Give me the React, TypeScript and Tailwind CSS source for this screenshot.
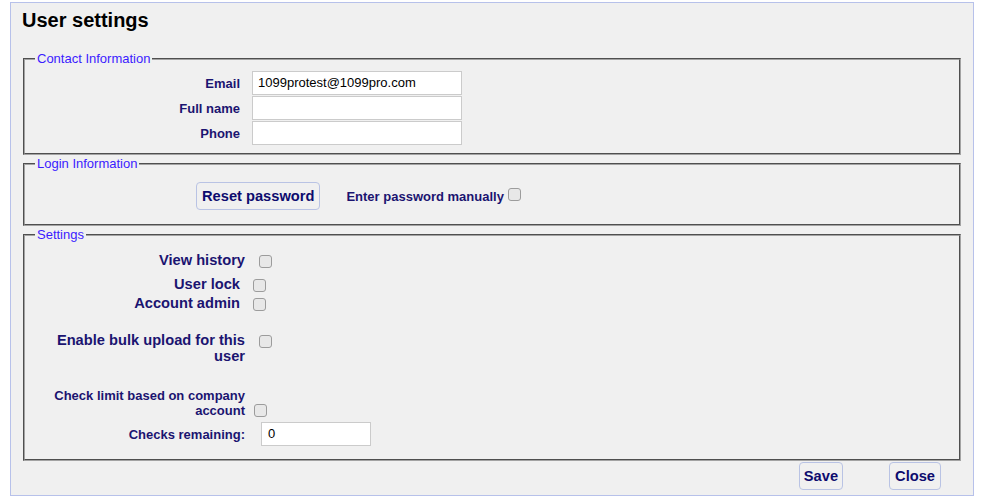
import React from "react";

const Box = ({ className = "" }: { className?: string }) => (
  <span
    className={
      "inline-block w-[13px] h-[13px] shrink-0 rounded-[3px] border border-[#9c9c9c] bg-[#e8e8e8] " +
      className
    }
  />
);

const fs =
  "mx-[12px] border-2 [border-style:groove] border-[#a3a3a3] px-[10px] min-w-0";
const lg = "px-[2px] text-[13px] leading-[15px] text-[#3b1cff]";
const lbl = "text-[#1b1470] font-bold";

export default function App() {
  return (
    <div className="pt-[2px] pl-[10px] font-['Liberation_Sans',Arial,sans-serif]">
      <div className="w-[964px] h-[494px] border border-[#b7c1ea] bg-[#f0f0f0] flex flex-col">
        <h1 className="pl-[11px] pt-[6px] text-[20px] leading-[23px] font-bold text-black">
          User settings
        </h1>

        {/* Contact Information */}
        <fieldset className={fs + " mt-[19px] pt-[5px] pb-[8px]"}>
          <legend className={lg}>Contact Information</legend>
          {[
            ["Email", "1099protest@1099pro.com"],
            ["Full name", ""],
            ["Phone", ""],
          ].map(([l, v], i) => (
            <div key={l} className={"flex items-center -ml-[10px]" + (i ? " mt-[1px]" : "")}>
              <div className={lbl + " w-[215px] text-right text-[13px] leading-[15px]"}>{l}</div>
              <div className="ml-[12px] w-[210px] h-[24px] border border-[#cbcbcb] bg-white pl-[5px] text-[13px] leading-[22px] text-black">
                {v}
              </div>
            </div>
          ))}
        </fieldset>

        {/* Login Information */}
        <fieldset className={fs + " mt-[1px] pt-[11px] pb-[14px]"}>
          <legend className={lg}>Login Information</legend>
          <div className="flex items-center pl-[161px]">
            <button className="h-[28px] px-[5px] rounded-[4px] border border-[#b9c3e4] bg-[#f0f0f0] text-[14.67px] font-bold text-[#0d0b6e] leading-[26px]">
              Reset password
            </button>
            <span className={lbl + " ml-[26px] text-[13px] leading-[15px]"}>
              Enter password manually
            </span>
            <Box className="ml-[4px] -mt-[4px]" />
          </div>
        </fieldset>

        {/* Settings */}
        <fieldset className={fs + " mt-[1px] pt-[10px] pb-[13px]"}>
          <legend className={lg}>Settings</legend>
          <div className="-ml-[10px] flex flex-col">
            <div className="flex items-center h-[17px]">
              <div className={lbl + " w-[220px] text-right text-[14.67px] leading-[17px]"}>View history</div>
              <Box className="ml-[14px] mt-[2px]" />
            </div>
            <div className="flex items-center h-[17px] mt-[7px]">
              <div className={lbl + " w-[215px] text-right text-[14.67px] leading-[17px]"}>User lock</div>
              <Box className="ml-[13px] mt-[2px]" />
            </div>
            <div className="flex items-center h-[17px] mt-[2px]">
              <div className={lbl + " w-[215px] text-right text-[14.67px] leading-[17px]"}>Account admin</div>
              <Box className="ml-[13px] mt-[2px]" />
            </div>
            <div className="flex items-start mt-[20px]">
              <div className="w-[220px] flex justify-end">
                <div className={lbl + " w-[196px] text-right text-[14.67px] leading-[16px]"}>
                  Enable bulk upload for this user
                </div>
              </div>
              <Box className="ml-[14px] mt-[3px]" />
            </div>
            <div className="flex items-end mt-[24px]">
              <div className="w-[220px] flex justify-end">
                <div className={lbl + " w-[200px] text-right text-[13px] leading-[15px]"}>
                  Check limit based on company account
                </div>
              </div>
              <Box className="ml-[9px] mb-[1px]" />
            </div>
            <div className="flex items-center mt-[4px]">
              <div className={lbl + " w-[220px] text-right text-[13px] leading-[15px]"}>Checks remaining:</div>
              <div className="ml-[16px] w-[110px] h-[24px] border border-[#cbcbcb] bg-white pl-[6px] text-[13px] leading-[22px] text-black">
                0
              </div>
            </div>
          </div>
        </fieldset>

        <div className="flex justify-end mt-[1px] pr-[32px]">
          <button className="h-[28px] px-[4px] rounded-[4px] border border-[#b9c3e4] bg-[#f0f0f0] text-[14.67px] font-bold text-[#0d0b6e] leading-[26px]">
            Save
          </button>
          <button className="ml-[46px] h-[28px] px-[5px] rounded-[4px] border border-[#b9c3e4] bg-[#f0f0f0] text-[14.67px] font-bold text-[#0d0b6e] leading-[26px]">
            Close
          </button>
        </div>
      </div>
    </div>
  );
}
